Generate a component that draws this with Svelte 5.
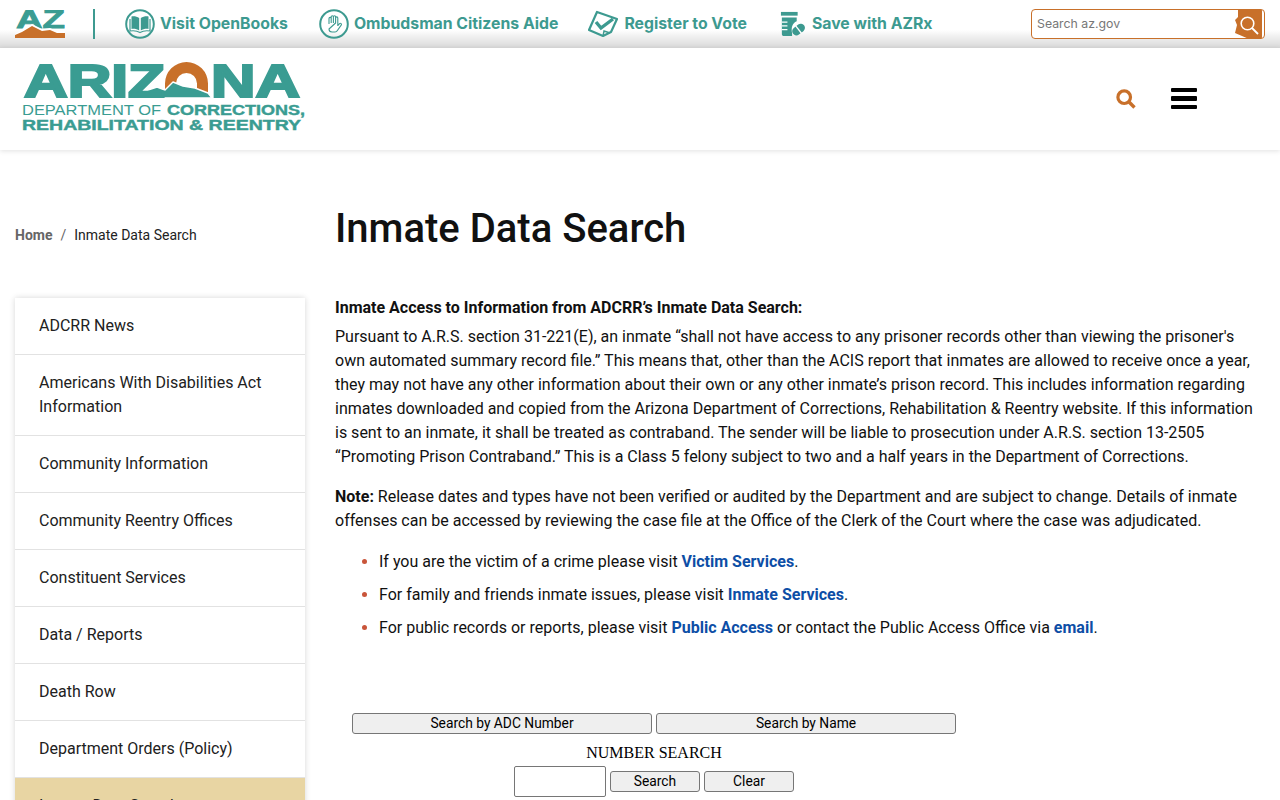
<script>
  const menu = [
    { label: 'ADCRR News' },
    { label: 'Americans With Disabilities Act Information' },
    { label: 'Community Information' },
    { label: 'Community Reentry Offices' },
    { label: 'Constituent Services' },
    { label: 'Data / Reports' },
    { label: 'Death Row' },
    { label: 'Department Orders (Policy)' },
    { label: 'Inmate Data Search', active: true }
  ];
</script>

<div class="topbar">
  <!-- AZ mark -->
  <a class="az" href="#top" aria-label="AZ">
    <svg width="50" height="28" viewBox="0 0 50 28">
      <text x="1" y="18" class="az-text" textLength="49" lengthAdjust="spacingAndGlyphs">AZ</text>
      <path d="M0 24 L7 20 L17 14 L27 19 L35 18 L42 21 L50 21 V28 H0 Z" fill="#fff" />
      <path d="M0 25 L7 22 L17 16 L27 21 L35 20 L42 23 L50 23 V28 H0 Z" fill="#c8702a" />
    </svg>
  </a>
  <span class="divider"></span>

  <nav class="quick">
    <a href="#top" class="q q1">
      <svg width="30" height="30" viewBox="0 0 30 30">
        <circle cx="15" cy="15" r="13.8" fill="none" stroke="#3d9a90" stroke-width="2" />
        <path d="M14.2 9 C12 7.4 9 7 6.5 7.4 V20 C9 19.6 12 20 14.2 21.6 Z M15.8 9 C18 7.4 21 7 23.5 7.4 V20 C21 19.6 18 20 15.8 21.6 Z" fill="#3d9a90" />
        <path d="M5 10 V22 C9 21.4 12.5 22 15 23.5 C17.5 22 21 21.4 25 22 V10" fill="none" stroke="#3d9a90" stroke-width="1.2" />
      </svg>
      Visit OpenBooks
    </a>
    <a href="#top" class="q q2">
      <svg width="30" height="30" viewBox="0 0 30 30">
        <circle cx="15" cy="15" r="13.8" fill="none" stroke="#3d9a90" stroke-width="2" />
        <path d="M10 15 V9.5 a1.1 1.1 0 0 1 2.2 0 V14 M12.2 14 V7.8 a1.1 1.1 0 0 1 2.2 0 V14 M14.4 14 V7.8 a1.1 1.1 0 0 1 2.2 0 V14 M16.6 14 V9 a1.1 1.1 0 0 1 2.2 0 V16.5 L20.6 14.6 a1.1 1.1 0 0 1 1.6 1.5 L18.4 21.5 a3 3 0 0 1 -2.4 1.5 H13 a3 3 0 0 1 -3 -3 Z" fill="none" stroke="#3d9a90" stroke-width="1.1" stroke-linejoin="round" />
      </svg>
      Ombudsman Citizens Aide
    </a>
    <a href="#top" class="q q3">
      <svg width="30" height="28" viewBox="0 0 30 28">
        <path d="M9 2 L29 9 L23 22 L15 26 L1 20 Z" fill="none" stroke="#3d9a90" stroke-width="2.2" stroke-linejoin="round" />
        <path d="M8 12 L13 18 L25 9" fill="none" stroke="#3d9a90" stroke-width="3.4" />
        <path d="M15 26 L16 21 L22 23" fill="none" stroke="#3d9a90" stroke-width="1.4" />
      </svg>
      Register to Vote
    </a>
    <a href="#top" class="q q4">
      <svg width="26" height="28" viewBox="0 0 28 28">
        <rect x="1" y="1" width="18" height="4" fill="#3d9a90" />
        <path d="M2 7 H18 V11 C13 13 12 18 13 24 V27 H4 C3 27 2 26 2 25 Z" fill="#3d9a90" />
        <path d="M2 12 H8 M2 16 H8 M2 20 H8" stroke="#fff" stroke-width="1.4" />
        <g transform="rotate(-38 20 20)">
          <rect x="12.5" y="15.5" width="15" height="9" rx="4.5" fill="#3d9a90" />
          <path d="M20 15 V25" stroke="#fff" stroke-width="1.4" />
        </g>
      </svg>
      Save with AZRx
    </a>
  </nav>

  <form class="azsearch" onsubmit={(e) => e.preventDefault()}>
    <input type="text" placeholder="Search az.gov" />
    <svg class="azstate" width="29" height="29" viewBox="0 0 29 29">
      <path d="M4 0 H28 V29 H15 L1 23 L3 15 L1 10 L4 7 Z" fill="#c8702a" />
      <circle cx="13.5" cy="13.5" r="6.3" fill="none" stroke="#fff" stroke-width="1.6" />
      <path d="M18 18 L24 24" stroke="#fff" stroke-width="1.8" />
    </svg>
  </form>
</div>

<header class="brand">
  <a class="logo" href="#top" aria-label="Arizona Department of Corrections, Rehabilitation and Reentry">
    <svg width="290" height="76" viewBox="0 0 290 76">
      <!-- sun + mountains in place of the O -->
      <path fill-rule="evenodd" d="M143 25.5 a21.5 21.5 0 0 1 43 0 V34 H143 Z M154 25.5 V34 H175 V25.5 a10.5 10.5 0 0 0 -21 0 Z" fill="#c8702a" />
      <path d="M120 40 V34 L135 29 L143 32 L151 24 L161 28 L173 30 L186 35 L190 40 Z" fill="#3a9c92" stroke="#fff" stroke-width="1.4" stroke-linejoin="round" />
      <text x="2" y="39" class="big" textLength="141" lengthAdjust="spacingAndGlyphs">ARIZ</text>
      <text x="189" y="39" class="big" textLength="89" lengthAdjust="spacingAndGlyphs">NA</text>
      <text x="0" y="57" class="line thin" textLength="139" lengthAdjust="spacingAndGlyphs">DEPARTMENT OF</text>
      <text x="145" y="57" class="line" textLength="138" lengthAdjust="spacingAndGlyphs">CORRECTIONS,</text>
      <text x="0" y="72" class="line" textLength="279" lengthAdjust="spacingAndGlyphs">REHABILITATION &amp; REENTRY</text>
    </svg>
  </a>
  <div class="tools">
    <svg width="20" height="20" viewBox="0 0 20 20">
      <circle cx="8.2" cy="8.2" r="6.3" fill="none" stroke="#c8702a" stroke-width="3.2" />
      <path d="M12.8 12.8 L18.5 18.5" stroke="#c8702a" stroke-width="3.4" />
    </svg>
    <span class="burger"><i></i><i></i><i></i></span>
  </div>
</header>

<div class="page">
  <aside>
    <ol class="crumbs">
      <li><a href="#top">Home</a></li>
      <li class="sep">/</li>
      <li>Inmate Data Search</li>
    </ol>
    <ul class="side">
      {#each menu as item}
        <li class:active={item.active}><a href="#top">{item.label}</a></li>
      {/each}
    </ul>
  </aside>

  <main>
    <h1>Inmate Data Search</h1>
    <p class="lead"><strong>Inmate Access to Information from ADCRR’s Inmate Data Search:</strong></p>
    <p class="tight">Pursuant to A.R.S. section 31-221(E), an inmate “shall not have access to any prisoner records other than viewing the prisoner's own automated summary record file.” This means that, other than the ACIS report that inmates are allowed to receive once a year, they may not have any other information about their own or any other inmate’s prison record. This includes information regarding inmates downloaded and copied from the Arizona Department of Corrections, Rehabilitation &amp; Reentry website. If this information is sent to an inmate, it shall be treated as contraband. The sender will be liable to prosecution under A.R.S. section 13-2505 “Promoting Prison Contraband.” This is a Class 5 felony subject to two and a half years in the Department of Corrections.</p>
    <p class="note"><strong>Note:</strong> Release dates and types have not been verified or audited by the Department and are subject to change. Details of inmate offenses can be accessed by reviewing the case file at the Office of the Clerk of the Court where the case was adjudicated.</p>
    <ul class="bullets">
      <li>If you are the victim of a crime please visit <a href="#top">Victim Services</a>.</li>
      <li>For family and friends inmate issues, please visit <a href="#top">Inmate Services</a>.</li>
      <li>For public records or reports, please visit <a href="#top">Public Access</a> or contact the Public Access Office via <a href="#top">email</a>.</li>
    </ul>

    <div class="lookup">
      <div class="tabs">
        <button type="button">Search by ADC Number</button>
        <button type="button">Search by Name</button>
      </div>
      <div class="numhead">NUMBER SEARCH</div>
      <div class="numrow">
        <input type="text" aria-label="ADC number" />
        <button type="button">Search</button>
        <button type="button">Clear</button>
      </div>
    </div>
  </main>
</div>

<style>
  :global(html), :global(body) {
    overflow: hidden;
    height: 800px;
  }

  :global(body) {
    background: #fff;
    color: #111;
    font-family: Roboto, "Liberation Sans", sans-serif;
    font-size: 16px;
    line-height: 24px;
  }

  a {
    text-decoration: none;
  }

  /* 顶部栏 */
  .topbar {
    height: 48px;
    display: flex;
    align-items: center;
    padding: 0 15px;
    box-sizing: border-box;
    background: linear-gradient(#fff 0, #fff 30px, #f1f1f1 36px, #d9d9d9 48px);
  }

  .az {
    display: flex;
    width: 50px;
    height: 28px;
  }

  .az-text {
    font-family: "Liberation Sans", Arial, sans-serif;
    font-weight: 700;
    font-size: 25px;
    fill: #3a9c92;
    stroke: #3a9c92;
    stroke-width: 0.8px;
  }

  .divider {
    width: 2px;
    height: 30px;
    margin-left: 28px;
    background: #3d9a90;
  }

  .quick {
    display: flex;
    align-items: center;
    margin-left: 30px;
  }

  .q {
    display: flex;
    align-items: center;
    gap: 5px;
    color: #3d9a90;
    font-family: Inter, "Liberation Sans", sans-serif;
    font-weight: 700;
    font-size: 15.8px;
    white-space: nowrap;
  }

  .q2 { margin-left: 31px; }
  .q3 { margin-left: 30px; gap: 6px; }
  .q4 { margin-left: 33px; gap: 6px; }

  .azsearch {
    margin-left: auto;
    width: 234px;
    height: 30px;
    box-sizing: border-box;
    border: 1px solid #c8702a;
    border-radius: 4px;
    background: #fff;
    display: flex;
    align-items: center;
    position: relative;
    overflow: hidden;
  }

  .azsearch input {
    border: 0;
    outline: 0;
    padding: 0 0 2px 5px;
    flex: 1;
    min-width: 0;
    background: transparent;
    font-family: Inter, "Liberation Sans", sans-serif;
    font-size: 12.3px;
  }

  .azsearch input::placeholder {
    color: #777;
    opacity: 1;
  }

  .azstate {
    position: absolute;
    right: 1px;
    top: 0;
  }

  /* 品牌栏 */
  .brand {
    height: 102px;
    display: flex;
    align-items: flex-start;
    justify-content: space-between;
    box-shadow: 0 1px 5px rgba(0, 0, 0, 0.12);
    position: relative;
  }

  .logo {
    display: flex;
    margin: 10px 0 0 22px;
  }

  .big {
    font-family: "Liberation Sans", Arial, sans-serif;
    font-weight: 700;
    font-size: 47px;
    fill: #3a9c92;
    stroke: #3a9c92;
    stroke-width: 2.2px;
  }

  .line {
    font-family: "Liberation Sans", Arial, sans-serif;
    font-weight: 700;
    font-size: 14px;
    fill: #3a9c92;
    stroke: #3a9c92;
    stroke-width: 0.4px;
  }

  .line.thin {
    font-weight: 400;
    stroke-width: 0;
  }

  .tools {
    display: flex;
    align-items: center;
    gap: 35px;
    margin: 40px 83px 0 0;
  }

  .burger {
    display: flex;
    flex-direction: column;
    gap: 4px;
    width: 26px;
  }

  .burger i {
    display: block;
    height: 4.4px;
    border-radius: 1px;
    background: #000;
  }

  /* 页面主体 */
  .page {
    display: grid;
    grid-template-columns: 290px 1fr;
    column-gap: 30px;
    padding: 0 15px;
  }

  .crumbs {
    list-style: none;
    margin: 0;
    padding: 73px 0 0;
    display: flex;
    gap: 8px;
    font-size: 14px;
    line-height: 24px;
    color: #222;
  }

  .crumbs a {
    color: #666;
    font-weight: 700;
  }

  .crumbs .sep {
    color: #666;
  }

  .side {
    list-style: none;
    margin: 51px 0 0;
    padding: 0;
    box-shadow: 0 0 6px rgba(0, 0, 0, 0.16);
  }

  .side li {
    border-bottom: 1px solid #e2e2e2;
  }

  .side a {
    display: block;
    padding: 16px 24px;
    color: #212121;
  }

  .side .active {
    background: #e8d5a3;
  }

  main {
    min-width: 0;
  }

  h1 {
    margin: 55px 0 0;
    font-size: 40px;
    line-height: 48px;
    font-weight: 500;
    color: #111;
  }

  p {
    margin: 0;
  }

  .lead {
    margin-top: 43px;
    line-height: 24px;
  }

  .lead strong, .note strong {
    font-weight: 700;
  }

  .tight {
    margin-top: 5px;
  }

  .note {
    margin-top: 16px;
  }

  .bullets {
    margin: 17px 0 0;
    padding: 0 0 0 44px;
  }

  .bullets li {
    margin-bottom: 9px;
  }

  .bullets li::marker {
    color: #c9553a;
  }

  .bullets a {
    color: #0d4ea6;
    font-weight: 700;
  }

  /* 查询表单 */
  .lookup {
    margin: 73px 0 0 17px;
    width: 604px;
    font-family: "Liberation Serif", "Times New Roman", serif;
    text-align: center;
  }

  .tabs {
    display: flex;
    gap: 4px;
  }

  button {
    font-family: Roboto, "Liberation Sans", sans-serif;
    font-size: 13.8px;
    line-height: 15px;
    color: #000;
    background: #efefef;
    border: 1px solid #767676;
    border-radius: 3px;
    padding: 1px 6px;
    height: 21px;
  }

  .tabs button {
    width: 300px;
  }

  .numhead {
    margin-top: 7px;
    font-size: 16px;
    line-height: 24px;
    color: #000;
  }

  .numrow {
    display: flex;
    justify-content: center;
    align-items: center;
    gap: 4px;
    margin-top: 1px;
  }

  .numrow input {
    width: 92px;
    height: 31px;
    box-sizing: border-box;
    border: 1px solid #767676;
    border-radius: 2px;
    padding: 1px 2px;
  }

  .numrow button {
    width: 90px;
  }
</style>
